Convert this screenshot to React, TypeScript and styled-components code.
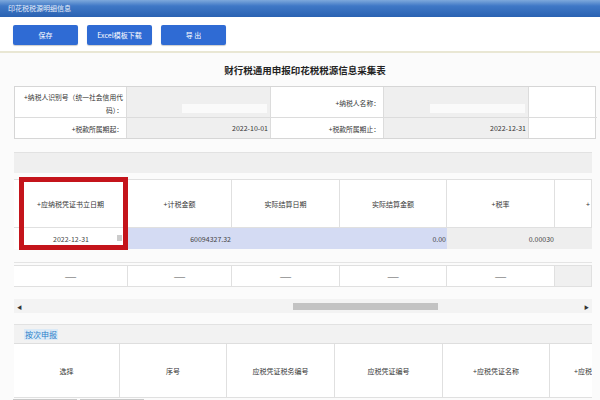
import React from "react";
import styled, { createGlobalStyle } from "styled-components";

const Global = createGlobalStyle`
  html, body { margin: 0; padding: 0; }
  body { font-family: "Noto Sans CJK SC", "Liberation Sans", sans-serif; background: #fbfbfb; }
`;

const Page = styled.div`
  width: 600px;
  height: 400px;
  overflow: hidden;
  background: #fbfbfb;
  display: flex;
  flex-direction: column;
`;

const TitleBar = styled.div`
  height: 17px;
  flex: none;
  background: linear-gradient(#7ea9dc 0%, #3f78c6 35%, #2a62b2 100%);
  color: #e8f0fb;
  font-size: 7px;
  line-height: 17px;
  padding-left: 8px;
`;

const Toolbar = styled.div`
  height: 36px;
  flex: none;
  box-sizing: border-box;
  background: #fff;
  border-bottom: 2px solid #e9e7d4;
  display: flex;
  align-items: center;
  gap: 9px;
  padding: 2px 13px 0;
`;

const Btn = styled.div`
  width: 65px;
  height: 20px;
  background: #2f6bd4;
  border-radius: 2px;
  color: #fff;
  font-size: 7px;
  display: flex;
  align-items: center;
  justify-content: center;
  box-shadow: 0 1px 1px rgba(0,0,0,0.2);
`;

const Content = styled.div`
  padding: 0 4px 0 14px;
  display: flex;
  flex-direction: column;
`;

const FormTitle = styled.div`
  height: 33px;
  display: flex;
  align-items: center;
  justify-content: center;
  font-size: 9.5px;
  font-weight: bold;
  color: #222;
`;

const InfoGrid = styled.div`
  display: grid;
  grid-template-columns: 112px 144px 113px 145px 68px;
  grid-template-rows: 31px 20px;
  border: 1px solid #d6d6d6;
  background: #fff;
  width: 582px;
  box-sizing: border-box;
`;

const Label = styled.div<{ last?: boolean }>`
  font-size: 6.8px;
  color: #333;
  text-align: right;
  padding: 3px 3px 0 4px;
  line-height: 13px;
  border-right: 1px solid #dcdcdc;
  border-bottom: ${(p) => (p.last ? "none" : "1px solid #dcdcdc")};
  display: flex;
  align-items: center;
  justify-content: flex-end;
`;

const Value = styled.div<{ last?: boolean }>`
  background: #efefef;
  font-size: 7px;
  color: #333;
  text-align: right;
  padding: 0 2px;
  border-right: 1px solid #dcdcdc;
  border-bottom: ${(p) => (p.last ? "none" : "1px solid #dcdcdc")};
  display: flex;
  align-items: center;
  justify-content: flex-end;
  position: relative;
`;

const InputStrip = styled.div<{ w: number }>`
  position: absolute;
  right: 3px;
  bottom: 4px;
  width: ${(p) => p.w}px;
  height: 9px;
  background: #fafafa;
`;

const Empty = styled.div<{ last?: boolean }>`
  border-bottom: ${(p) => (p.last ? "none" : "1px solid #dcdcdc")};
`;

const GrayBand = styled.div`
  margin-top: 13px;
  height: 20px;
  width: 578px;
  background: #efefef;
  border-top: 1px solid #e2e2e2;
`;

const TableWrap = styled.div`
  position: relative;
  margin-top: 4px;
  width: 578px;
  padding-top: 2px;
`;

const cols = "114px 104px 108px 107px 108px 37px";

const HeadRow = styled.div<{ h: number }>`
  display: grid;
  grid-template-columns: ${cols};
  height: ${(p) => p.h}px;
  background: #fff;
  border-top: 1px solid #e0e0e0;
  border-bottom: 1px solid #e0e0e0;
`;

const HeadCell = styled.div<{ edge?: boolean }>`
  display: flex;
  align-items: center;
  justify-content: ${(p) => (p.edge ? "flex-end" : "center")};
  font-size: 7px;
  color: #333;
  border-right: 1px solid #e0e0e0;
  white-space: nowrap;
  overflow: hidden;
  padding-right: ${(p) => (p.edge ? "1px" : "0")};
`;

const DataRow = styled.div`
  display: grid;
  grid-template-columns: ${cols};
  height: 21px;
`;

const DataCell = styled.div<{ bg: string; align?: string }>`
  background: ${(p) => p.bg};
  display: flex;
  align-items: center;
  justify-content: ${(p) => p.align || "flex-end"};
  font-size: 7px;
  color: #444;
  padding: 0 1px;
  position: relative;
`;

const Handle = styled.span`
  position: absolute;
  right: 6px;
  top: 7px;
  width: 5px;
  height: 6px;
  background: #ccc;
`;

const RedBox = styled.div`
  position: absolute;
  left: 5px;
  top: 0;
  width: 109px;
  height: 73px;
  border: 5px solid #c4141b;
  box-sizing: border-box;
  pointer-events: none;
`;

const Separator = styled.div`
  margin-top: 13px;
  width: 578px;
  height: 1px;
  background: #e4e4e4;
`;

const DashRow = styled.div`
  margin-top: 2px;
  display: grid;
  grid-template-columns: ${cols};
  height: 20px;
  border-top: 1px solid #e0e0e0;
  border-bottom: 1px solid #e0e0e0;
  width: 578px;
  background: #fff;
`;

const DashCell = styled.div<{ gray?: boolean }>`
  display: flex;
  align-items: center;
  justify-content: center;
  font-size: 7px;
  color: #555;
  border-right: 1px solid #e0e0e0;
  background: ${(p) => (p.gray ? "#f0f0f0" : "#fff")};
`;

const Scrollbar = styled.div`
  margin-top: 12px;
  width: 578px;
  height: 14px;
  background: #f3f3f3;
  display: flex;
  align-items: center;
  padding: 0 3px;
  box-sizing: border-box;
  font-size: 5px;
  color: #333;
`;

const Track = styled.div`
  flex: 1;
  height: 100%;
  display: flex;
  align-items: center;
  padding-left: 271px;
`;

const Thumb = styled.div`
  width: 145px;
  height: 7px;
  background: #c3c3c3;
`;

const SectionHead = styled.div`
  margin-top: 11px;
  width: 578px;
  height: 20px;
  background: #f2f2f2;
  border-top: 1px solid #e2e2e2;
  border-bottom: 1px solid #dedede;
  display: flex;
  align-items: center;
  padding-left: 10px;
  box-sizing: border-box;
`;

const SectionTitle = styled.span`
  font-size: 8px;
  color: #2a7fc9;
  background: #dbeaf7;
  padding: 0 1px;
`;

const LowerHead = styled.div`
  display: grid;
  grid-template-columns: 106px 107px 108px 108px 107px 42px;
  width: 578px;
  height: 53px;
  background: #fff;
  border-bottom: 1px solid #e0e0e0;
`;

const LowerCell = styled.div<{ edge?: boolean }>`
  display: flex;
  align-items: center;
  justify-content: ${(p) => (p.edge ? "flex-end" : "center")};
  font-size: 7px;
  color: #333;
  border-right: ${(p) => (p.edge ? "none" : "1px solid #e0e0e0")};
  white-space: nowrap;
  overflow: hidden;
`;

const BottomBar = styled.div`
  display: flex;
  gap: 3px;
  margin-top: 1px;
  margin-left: -1px;
`;

const GrayBtn = styled.div`
  width: 62px;
  height: 12px;
  background: #d9d9d9;
  border: 1px solid #c8c8c8;
`;

export default function App() {
  return (
    <Page>
      <Global />
      <TitleBar>印花税税源明细信息</TitleBar>
      <Toolbar>
        <Btn>保存</Btn>
        <Btn>Excel模板下载</Btn>
        <Btn>导 出</Btn>
      </Toolbar>
      <Content>
        <FormTitle>财行税通用申报印花税税源信息采集表</FormTitle>
        <InfoGrid>
          <Label>+纳税人识别号（统一社会信用代码）：</Label>
          <Value><InputStrip w={85} /></Value>
          <Label>+纳税人名称：</Label>
          <Value><InputStrip w={95} /></Value>
          <Empty />
          <Label last>+税款所属期起：</Label>
          <Value last>2022-10-01</Value>
          <Label last>+税款所属期止：</Label>
          <Value last>2022-12-31</Value>
          <Empty last />
        </InfoGrid>
        <GrayBand />
        <TableWrap>
          <HeadRow h={47}>
            <HeadCell>+应纳税凭证书立日期</HeadCell>
            <HeadCell>+计税金额</HeadCell>
            <HeadCell>实际结算日期</HeadCell>
            <HeadCell>实际结算金额</HeadCell>
            <HeadCell>+税率</HeadCell>
            <HeadCell edge>+</HeadCell>
          </HeadRow>
          <DataRow>
            <DataCell bg="#fff" align="center">
              2022-12-31
              <Handle />
            </DataCell>
            <DataCell bg="#d4dbf3">60094327.32</DataCell>
            <DataCell bg="#d4dbf3" />
            <DataCell bg="#d4dbf3">0.00</DataCell>
            <DataCell bg="#eeeeee">0.00030</DataCell>
            <DataCell bg="#eeeeee" />
          </DataRow>
          <RedBox />
        </TableWrap>
        <Separator />
        <DashRow>
          <DashCell>——</DashCell>
          <DashCell>——</DashCell>
          <DashCell>——</DashCell>
          <DashCell>——</DashCell>
          <DashCell>——</DashCell>
          <DashCell gray />
        </DashRow>
        <Scrollbar>
          <span>◀</span>
          <Track><Thumb /></Track>
          <span>▶</span>
        </Scrollbar>
        <SectionHead>
          <SectionTitle>按次申报</SectionTitle>
        </SectionHead>
        <LowerHead>
          <LowerCell>选择</LowerCell>
          <LowerCell>序号</LowerCell>
          <LowerCell>应税凭证税务编号</LowerCell>
          <LowerCell>应税凭证编号</LowerCell>
          <LowerCell>+应税凭证名称</LowerCell>
          <LowerCell edge>+应税</LowerCell>
        </LowerHead>
        <BottomBar>
          <GrayBtn />
          <GrayBtn />
        </BottomBar>
      </Content>
    </Page>
  );
}
